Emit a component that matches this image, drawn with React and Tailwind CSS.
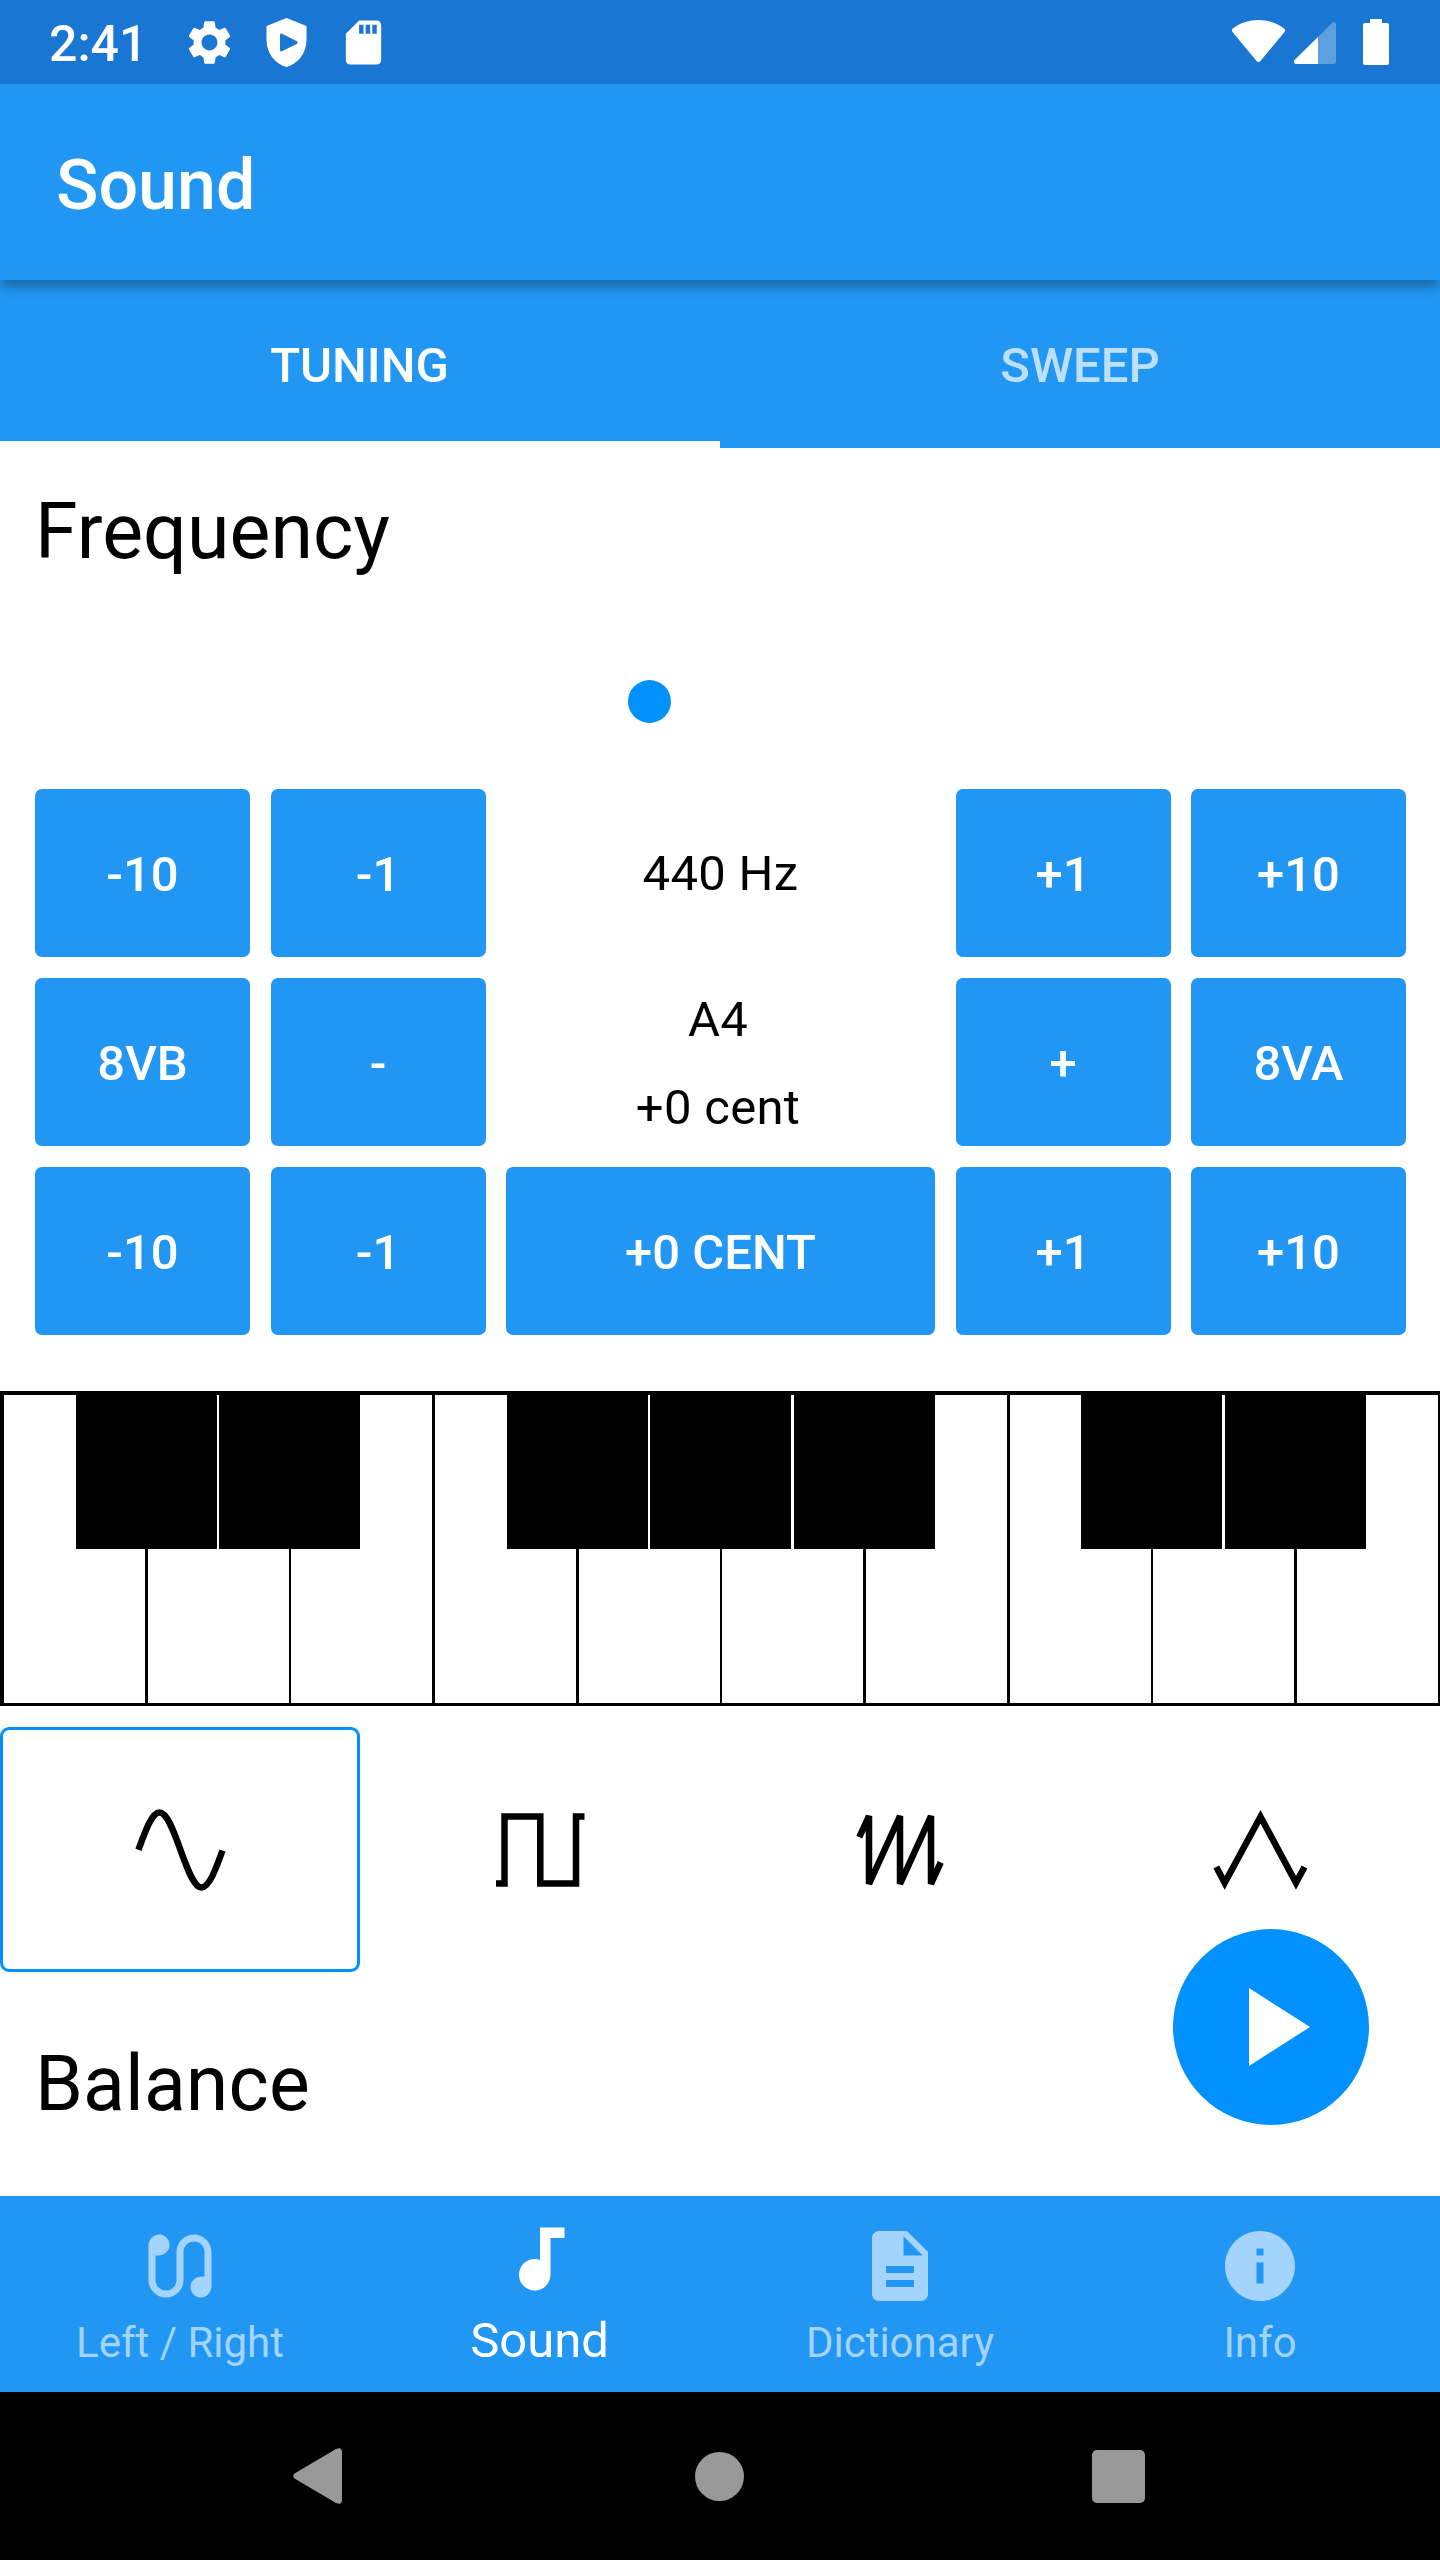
import React from "react";
import { MdSettings, MdSdCard, MdEarbuds, MdAudiotrack, MdDescription, MdInfo } from "react-icons/md";

const FREQ_ROWS = [
  { left: ["-10", "-1"], right: ["+1", "+10"], center: "freq" },
  { left: ["8VB", "-"], right: ["+", "8VA"], center: "note" },
  { left: ["-10", "-1"], right: ["+1", "+10"], center: "cent" },
];

const KEY_LINES = [
  [145, 3], [289, 2], [432, 3], [576, 3], [720, 2], [863, 3], [1007, 3], [1151, 2], [1294, 3], [1438, 2],
];
const BLACK_KEYS = [76, 219, 507, 650, 794, 1081, 1225];

function StatusBar() {
  return (
    <div className="flex h-[84px] items-center justify-between bg-[#1976d2] text-white">
      <div className="flex items-center">
        <span className="w-[183px] pl-[49px] text-[50px] leading-[84px] font-medium pt-[3px]">2:41</span>
        <MdSettings className="size-[53px]" />
        <svg className="ml-[30px] h-[49px] w-[41px]" viewBox="0 0 41 49" fill="currentColor">
          <path fillRule="evenodd" d="M20.5 0L40.5 8V22C40.5 35 32 46 20.5 49C9 46 .5 35 .5 22V8ZM14 17V32Q14 34 16 33.3L31 25.8Q32.5 24.5 31 23.2L16 15.7Q14 15 14 17Z" />
        </svg>
        <MdSdCard className="ml-[30px] size-[53px]" />
      </div>
      <div className="flex items-center pr-[51px]">
        <svg className="h-[84px] w-[157px]" viewBox="1232 0 157 84" fill="currentColor">
          <path d="M1233 28.5C1247 17 1270 17 1284 28.5Q1286 30 1284.500 32L1260.500 61Q1258.500 63 1256.500 61L1232.500 32Q1231 30 1233 28.500Z" />
          <path opacity=".3" d="M1318 37L1332 23Q1336 20.500 1336 25V61.500Q1336 64 1333.500 64H1318Z" />
          <path d="M1318 37V64H1296.500Q1293.500 64 1294 60.500Z" />
          <path d="M1370 19H1382V23H1387Q1389 23 1389 25V63Q1389 65 1387 65H1365Q1363 65 1363 63V25Q1363 23 1365 23H1370Z" />
        </svg>
      </div>
    </div>
  );
}

function PadButton({ label, wide }) {
  return (
    <button className={(wide ? "w-[429px]" : "w-[215px]") + " h-[168px] rounded-[7px] bg-[#2196f3] pt-1 text-[49px] font-medium text-white"}>
      {label}
    </button>
  );
}

function Center({ kind }) {
  if (kind === "cent") return <PadButton label="+0 CENT" wide />;
  if (kind === "freq") return <div className="flex w-[429px] items-center justify-center pt-px text-[49px] tracking-[0.3px]">440 Hz</div>;
  return (
    <div className="flex w-[429px] flex-col items-center text-[49px] tracking-[0.3px]">
      <div className="h-[88px] pr-[5px] leading-[84px]">A4</div>
      <div className="h-[80px] pr-[5px] leading-[84px]">+0 cent</div>
    </div>
  );
}

function Piano() {
  return (
    <svg className="mt-14 block h-[315px] w-full" viewBox="0 0 1440 315" shapeRendering="crispEdges">
      <rect width="1440" height="4" />
      <rect y="312" width="1440" height="3" />
      <rect width="4" height="315" />
      {KEY_LINES.map(([x, w]) => <rect key={x} x={x} width={w} height="315" />)}
      {BLACK_KEYS.map((x) => <rect key={x} x={x} width="141" height="158" />)}
    </svg>
  );
}

const WAVES = [
  <path key="sine" d="M-41.500 -.2C-34.650 -19.150 -28.100 -37.500 -20.500 -37.500S-6.350 -18.950 .5 0S13.900 37.500 21.500 37.500S35.650 19.450 42.500 .5" />,
  <path key="square" d="M-44 33.500H-35.500V-33.500H.3V33.500H36V-33.500H44.500" />,
  <path key="saw" strokeLinejoin="bevel" d="M-40.700 -12.800L-31 -34V34L0 -34V34L31 -34V34L40.700 12.300" />,
  <path key="triangle" d="M-43.700 17L-35.300 32.800L.5 -33.200L36 32.800L44.500 17" />,
];

function WaveForms() {
  return (
    <div className="mt-[21px] grid h-[245px] grid-cols-4">
      {WAVES.map((wave, i) => (
        <div key={i} className={"flex items-center justify-center rounded-[9px] border-3 " + (i === 0 ? "border-[#0091ff]" : "border-transparent")}>
          <svg className="size-[120px]" viewBox="-60 -60 120 120" fill="none" stroke="#000" strokeWidth="6.5">{wave}</svg>
        </div>
      ))}
    </div>
  );
}

const NAV = [
  { label: "Left / Right", Icon: MdEarbuds },
  { label: "Sound", Icon: MdAudiotrack, active: true },
  { label: "Dictionary", Icon: MdDescription },
  { label: "Info", Icon: MdInfo },
];

export default function App() {
  return (
    <div className="flex h-[2560px] w-[1440px] flex-col overflow-hidden bg-white font-[Roboto,sans-serif] text-black">
      <StatusBar />
      <header className="relative z-10 flex h-[196px] items-center bg-[#2196f3] px-14 pt-1.5 text-[70px] font-medium text-white shadow-[0_9px_11px_-2px_rgba(0,0,0,0.3)]">
        Sound
      </header>
      <div className="grid h-[168px] grid-cols-2 bg-[#2196f3] text-center text-[49px] leading-[172px] font-medium text-white">
        <div className="h-[168px] border-b-[7px] border-white pr-px">TUNING</div>
        <div className="text-white/70">SWEEP</div>
      </div>

      <main className="relative h-[1748px]">
        <h2 className="h-[232px] px-[35px] pt-[35px] text-[77px] leading-[98px] tracking-[0.1px]">Frequency</h2>
        <div className="flex h-[109px] pl-[628px]">
          <div className="size-[43px] rounded-full bg-[#0091ff]" />
        </div>
        <div className="flex flex-col gap-[21px] pr-[34px] pl-[35px]">
          {FREQ_ROWS.map((row, i) => (
            <div key={i} className="flex h-[168px] justify-between">
              {row.left.map((l) => <PadButton key={l} label={l} />)}
              <Center kind={row.center} />
              {row.right.map((l) => <PadButton key={l} label={l} />)}
            </div>
          ))}
        </div>
        <Piano />
        <WaveForms />
        <h2 className="px-[35px] pt-[63px] text-[77px] leading-[98px] tracking-[0.1px]">Balance</h2>
        <button className="absolute top-[1481px] left-[1173px] flex size-[196px] items-center justify-center rounded-full bg-[#0091ff]">
          <svg className="ml-4 h-[78px] w-[61px]" viewBox="0 0 61 78" fill="#fff"><path d="M0 0L61 39L0 78Z" /></svg>
        </button>
      </main>

      <nav className="grid h-[196px] grid-cols-4 bg-[#2196f3]">
        {NAV.map(({ label, Icon, active }) => (
          <div key={label} className={"flex flex-col items-center " + (active ? "pt-[21px] text-[49px] text-white" : "pt-7 text-[42px] text-[#a4d3fb]")}>
            <Icon className="size-[84px]" />
            <span className={active ? "pr-px leading-[79px]" : "leading-[70px]"}>{label}</span>
          </div>
        ))}
      </nav>

      <footer className="flex h-[168px] items-center justify-between bg-black pr-[295px] pl-[293px]">
        <svg className="h-[56px] w-[53px]" viewBox="0 0 53 56" fill="#999"><path d="M1.500 25.500L43 1Q49 -1.500 49 4V52Q49 57.500 43 55L1.500 30.500Q-1 28 1.500 25.500Z" /></svg>
        <div className="size-[49px] rounded-full bg-[#999]" />
        <div className="size-[53px] rounded-[5px] bg-[#999]" />
      </footer>
    </div>
  );
}
